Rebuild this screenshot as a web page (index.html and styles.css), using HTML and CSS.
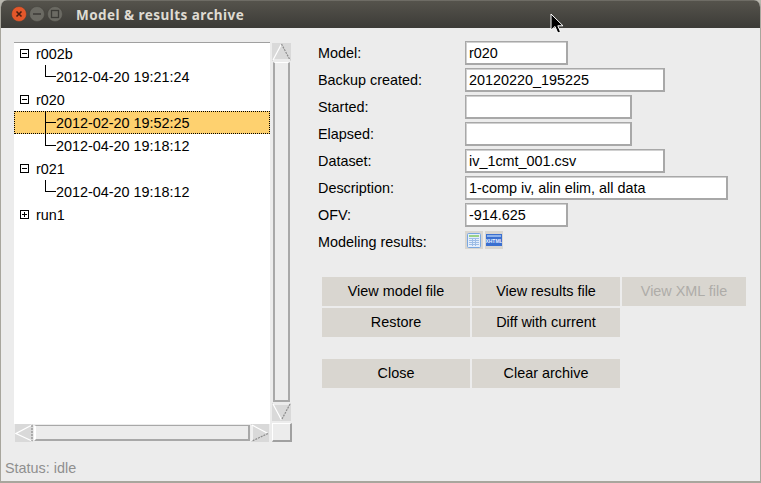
FILE: index.html
```html
<!DOCTYPE html>
<html lang="en">
<head>
<meta charset="utf-8">
<title>Model &amp; results archive</title>
<link rel="stylesheet" href="styles.css">
</head>
<body>
<div class="window">
  <header class="titlebar">
    <div class="controls">
      <svg class="ctl" width="18" height="18" viewBox="0 0 18 18"><circle class="ctl-close" cx="9" cy="9" r="7.500"/><path class="ctl-x" d="M6.500 6.500l5 5M11.500 6.500l-5 5"/></svg>
      <svg class="ctl" width="18" height="18" viewBox="0 0 18 18"><circle class="ctl-grey" cx="9" cy="9" r="7.500"/><path class="ctl-g" d="M5 9h8"/></svg>
      <svg class="ctl" width="18" height="18" viewBox="0 0 18 18"><circle class="ctl-grey" cx="9" cy="9" r="7.500"/><rect class="ctl-g" x="5.500" y="5.500" width="7" height="7"/></svg>
    </div>
    <h1 class="title">Model &amp; results archive</h1>
  </header>
  <main class="content">
    <section class="tree-pane">
      <div class="tree">
        <div class="row"><span class="box minus"></span><span class="name">r002b</span></div>
        <div class="row child last"><span class="stamp">2012-04-20 19:21:24</span></div>
        <div class="row"><span class="box minus"></span><span class="name">r020</span></div>
        <div class="row child selected"><span class="stamp">2012-02-20 19:52:25</span></div>
        <div class="row child last"><span class="stamp">2012-04-20 19:18:12</span></div>
        <div class="row"><span class="box minus"></span><span class="name">r021</span></div>
        <div class="row child last"><span class="stamp">2012-04-20 19:18:12</span></div>
        <div class="row"><span class="box plus"></span><span class="name">run1</span></div>
      </div>
      <div class="vscroll">
        <svg class="arrow" width="19" height="18" viewBox="0 0 19 18"><path class="lit" d="M1 17 9.500 1"/><path class="dim" d="M9.500 1 18 17"/><path class="lit" d="M1 17H18"/></svg>
        <div class="vthumb"></div>
        <svg class="arrow" width="19" height="18" viewBox="0 0 19 18"><path class="lit" d="M1 1H18M1 1 9.500 17"/><path class="dim" d="M18 1 9.500 17"/></svg>
      </div>
      <div class="hscroll">
        <svg class="arrow" width="18" height="18" viewBox="0 0 18 18"><path class="lit" d="M17 1 1 9.500 17 17"/><path class="dim" d="M17 1V17"/></svg>
        <div class="hthumb"></div>
        <svg class="arrow" width="18" height="18" viewBox="0 0 18 18"><path class="lit" d="M1 1V17M1 1 17 9.500"/><path class="dim" d="M17 9.500 1 17"/></svg>
      </div>
      <div class="corner"></div>
    </section>
    <section class="details">
      <div class="form">
        <label class="label">Model:</label><input class="entry w-s" readonly value="r020">
        <label class="label">Backup created:</label><input class="entry w-l" readonly value="20120220_195225">
        <label class="label">Started:</label><input class="entry w-m" readonly value="">
        <label class="label">Elapsed:</label><input class="entry w-m" readonly value="">
        <label class="label">Dataset:</label><input class="entry w-l" readonly value="iv_1cmt_001.csv">
        <label class="label">Description:</label><input class="entry w-xl" readonly value="1-comp iv, alin elim, all data">
        <label class="label">OFV:</label><input class="entry w-s" readonly value="-914.625">
        <span class="label results-label">Modeling results:</span>
        <div class="icons">
          <button class="icon-btn" aria-label="Table">
            <svg width="14" height="15" viewBox="0 0 14 15"><rect class="sheet" x=".5" y=".5" width="13" height="14" rx="1"/><rect class="sheet-head" x="2" y="2" width="10" height="2"/><path class="sheet-grid" d="M2 5.500h10M2 7.500h10M2 9.500h10M2 11.500h10M5.500 5v8M8.500 5v8"/></svg>
          </button>
          <button class="icon-btn" aria-label="XHTML">
            <svg width="16" height="12" viewBox="0 0 16 12"><rect class="badge" width="16" height="12"/><rect class="badge-shine" x="1" y="1" width="14" height="2"/><text class="badge-text" x="8" y="9">XHTML</text></svg>
          </button>
        </div>
      </div>
      <div class="actions">
        <button class="btn">View model file</button>
        <button class="btn">View results file</button>
        <button class="btn btn-narrow" disabled>View XML file</button>
        <button class="btn">Restore</button>
        <button class="btn">Diff with current</button>
      </div>
      <div class="actions actions-bottom">
        <button class="btn">Close</button>
        <button class="btn">Clear archive</button>
      </div>
    </section>
  </main>
  <footer class="status">Status: idle</footer>
  <svg class="cursor" width="14" height="22" viewBox="0 0 14 22"><path class="cursor-shape" d="M1 1V17L5 13.500 7.800 20 10.500 18.800 7.800 12.800H13Z"/></svg>
</div>
</body>
</html>
```
FILE: styles.css
```css
* { box-sizing: border-box; }
html, body { margin: 0; height: 100%; background: #b9b7ae; overflow: hidden; }
body { font: 14.4px "Liberation Sans", Arial, sans-serif; color: #000; }

.window {
  position: relative;
  width: 761px;
  height: 483px;
  display: flex;
  flex-direction: column;
  background: #ececec;
  border-radius: 7px 7px 0 0;
  overflow: hidden;
  border-left: 1px solid #a8a69d;
  border-right: 1px solid #a8a69d;
  border-bottom: 2px solid #a8a69d;
}

.titlebar {
  flex: none;
  height: 28px;
  margin: 0 -1px;
  display: flex;
  align-items: center;
  padding: 0 0 0 10px;
  background: linear-gradient(#55534c, #3c3b37);
  border-top: 1px solid #6e6c65;
}
.controls { display: flex; gap: 0; margin-top: -1px; }
.ctl { display: block; }
.ctl-close { fill: #e4572a; stroke: #45433d; stroke-width: .5; }
.ctl-x { stroke: #4a1e10; stroke-width: 1.6; fill: none; }
.ctl-grey { fill: #6b6a63; stroke: #45433d; stroke-width: .5; }
.ctl-g { stroke: #3b3a36; stroke-width: 1.3; fill: none; }
.title {
  margin: 0 0 0 12px;
  font: bold 13.5px "Noto Sans", "Open Sans", sans-serif;
  color: #dfdbd2;
  letter-spacing: .45px;
}

.content { flex: 1; display: flex; padding: 14px 0 0 13px; min-height: 0; }

.tree-pane {
  display: grid;
  grid-template-columns: 256px 22px;
  grid-template-rows: 382px 18px;
  width: 304px;
  height: 400px;
}
.tree { background: #fff; box-shadow: inset 0 1px #a0a0a0; }
.row { position: relative; height: 23px; display: flex; align-items: center; }
.box {
  position: relative;
  flex: none;
  width: 9px;
  height: 9px;
  margin-left: 6px;
  border: 1px solid #000;
  background: #fff;
}
.box::before { content: ""; position: absolute; left: 1px; right: 1px; top: 3px; height: 1px; background: #000; }
.plus::after { content: ""; position: absolute; top: 1px; bottom: 1px; left: 3px; width: 1px; background: #000; }
.name { margin-left: 7px; }
.stamp { margin-left: 42px; }
.child::before {
  content: "";
  position: absolute;
  left: 31px;
  top: 0;
  bottom: 0;
  width: 1px;
  background: #000;
}
.child.last::before { bottom: 11px; }
.child::after {
  content: "";
  position: absolute;
  left: 31px;
  top: 11px;
  width: 11px;
  height: 1px;
  background: #000;
}
.selected { background: #fed16f; outline: 1px dotted #000; outline-offset: -1px; }

.vscroll {
  width: 19px;
  margin: 1px 0 3px 2px;
  display: flex;
  flex-direction: column;
  gap: 1px;
}
.arrow { display: block; flex: none; background: #d9d9d9; }
.lit { stroke: #fff; stroke-width: 1.2; fill: none; }
.dim { stroke: #8c8c8c; stroke-width: 1.2; fill: none; stroke-dasharray: 2 1; }
.vthumb { flex: 1; margin: 0 1px; border: solid #a8a8a8; border-width: 1px 2px 2px; border-top-color: #fff; background: #ececec; }

.hscroll { display: flex; gap: 1px; height: 18px; margin-left: 1px; width: 254px; }
.hthumb { flex: 1; margin: 1px 0; border: solid #a8a8a8; border-width: 1px 2px 2px; border-left-color: #fff; background: #ececec; }
.corner {
  width: 20px;
  height: 19px;
  margin: -1px 0 0 2px;
  border: 1px solid #fff;
  border-right: 2px solid #a0a0a0;
  border-bottom: 2px solid #a0a0a0;
}

.details { flex: 1; min-width: 0; display: flex; flex-direction: column; margin-top: -1px; }
.form {
  display: grid;
  grid-template-columns: 147px 1fr;
  grid-auto-rows: 24px;
  row-gap: 3px;
  align-items: center;
  justify-items: start;
}
.label { white-space: nowrap; }
.entry {
  height: 24px;
  padding: 0 2px 0 3px;
  margin: 0;
  font: inherit;
  color: #000;
  background: #fff;
  border: solid #a8a8a8;
  border-width: 1px 2px 2px 1px;
  box-shadow: inset 1px 1px #d0d0d0;
  border-radius: 0;
  outline: none;
}
.w-s { width: 103px; }
.w-m { width: 167px; }
.w-l { width: 200px; }
.w-xl { width: 263px; }
.results-label { align-self: center; }
.icons { display: flex; gap: 2px; align-self: start; margin-top: 1px; }
.icon-btn {
  width: 18px;
  height: 18px;
  padding: 0;
  border: 0;
  background: #d9d6d0;
  display: flex;
  align-items: center;
  justify-content: center;
}
.sheet { fill: #e4eefb; stroke: #7aa7e0; }
.sheet-head { fill: #9ad187; }
.sheet-grid { stroke: #9dbde6; stroke-width: 1; fill: none; }
.badge { fill: #3a6fd0; }
.badge-shine { fill: #8fb2ea; }
.badge-text { font: bold 5px "Liberation Sans", sans-serif; fill: #e8f0ff; text-anchor: middle; }

.actions {
  margin: 23px 0 0 4px;
  display: grid;
  grid-template-columns: 148px 148px 124px;
  grid-auto-rows: 29px;
  gap: 2px;
}
.actions-bottom { margin-top: 22px; }
.btn {
  padding: 0 0 2px;
  border: 0;
  font: inherit;
  color: #000;
  background: #d9d6d0;
}
.btn:disabled { color: #aeaca8; }

.status { flex: none; height: 28px; padding: 2px 0 0 4px; color: #8f8f8f; line-height: 27px; }

.cursor { position: absolute; left: 549px; top: 13px; }
.cursor-shape { fill: #000; stroke: #fff; stroke-width: 1; }
```
